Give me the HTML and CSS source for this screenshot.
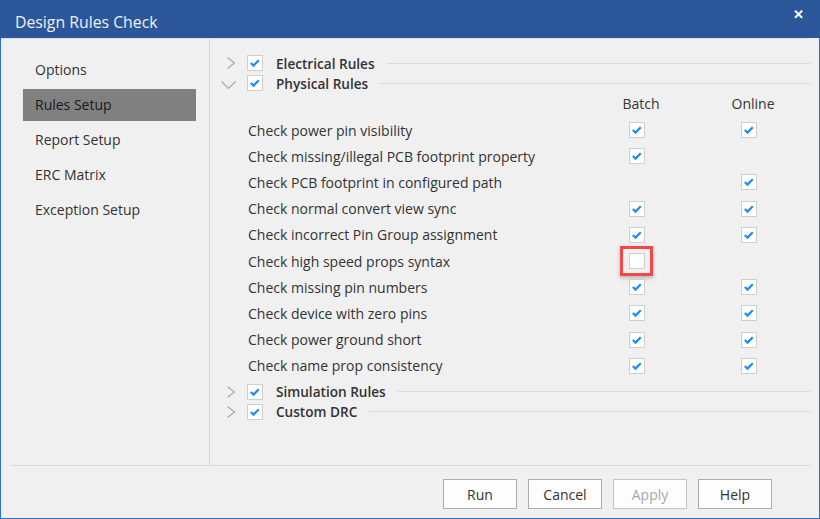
FILE: index.html
```html
<!DOCTYPE html>
<html>
<head>
    <title>Design Rules Check</title>
    <link rel="stylesheet" href="styles.css">
</head>
<body>
    <div class="window">
        <div class="titlebar">
            <span class="title">Design Rules Check</span>
            <span class="close">&#x2715;</span>
        </div>

        <div class="main">
            <div class="sidebar">
                <div class="nav-item">Options</div>
                <div class="nav-item active">Rules Setup</div>
                <div class="nav-item">Report Setup</div>
                <div class="nav-item">ERC Matrix</div>
                <div class="nav-item">Exception Setup</div>
            </div>

            <div class="panel">
                <div class="group">
                    <svg class="chevron" viewBox="0 0 16 16"><polyline points="6.5,2.5 13.5,8 6.5,13.5"/></svg>
                    <span class="cb checked"></span>
                    <span class="group-name">Electrical Rules</span>
                    <span class="rule-line"></span>
                </div>
                <div class="group">
                    <svg class="chevron" viewBox="0 0 16 16"><polyline points="0.5,6.5 7.5,13.5 14.5,6.5"/></svg>
                    <span class="cb checked"></span>
                    <span class="group-name">Physical Rules</span>
                    <span class="rule-line"></span>
                </div>

                <div class="col-head">
                    <span class="head batch">Batch</span>
                    <span class="head online">Online</span>
                </div>

                <div class="rules">
                    <div class="rule"><span class="label">Check power pin visibility</span><span class="cell"><span class="cb checked"></span></span><span class="cell"><span class="cb checked"></span></span></div>
                    <div class="rule"><span class="label">Check missing/illegal PCB footprint property</span><span class="cell"><span class="cb checked"></span></span><span class="cell"></span></div>
                    <div class="rule"><span class="label">Check PCB footprint in configured path</span><span class="cell"></span><span class="cell"><span class="cb checked"></span></span></div>
                    <div class="rule"><span class="label">Check normal convert view sync</span><span class="cell"><span class="cb checked"></span></span><span class="cell"><span class="cb checked"></span></span></div>
                    <div class="rule"><span class="label">Check incorrect Pin Group assignment</span><span class="cell"><span class="cb checked"></span></span><span class="cell"><span class="cb checked"></span></span></div>
                    <div class="rule"><span class="label">Check high speed props syntax</span><span class="cell"><span class="cb"></span><span class="highlight"></span></span><span class="cell"></span></div>
                    <div class="rule"><span class="label">Check missing pin numbers</span><span class="cell"><span class="cb checked"></span></span><span class="cell"><span class="cb checked"></span></span></div>
                    <div class="rule"><span class="label">Check device with zero pins</span><span class="cell"><span class="cb checked"></span></span><span class="cell"><span class="cb checked"></span></span></div>
                    <div class="rule"><span class="label">Check power ground short</span><span class="cell"><span class="cb checked"></span></span><span class="cell"><span class="cb checked"></span></span></div>
                    <div class="rule"><span class="label">Check name prop consistency</span><span class="cell"><span class="cb checked"></span></span><span class="cell"><span class="cb checked"></span></span></div>
                </div>

                <div class="group">
                    <svg class="chevron" viewBox="0 0 16 16"><polyline points="6.5,2.5 13.5,8 6.5,13.5"/></svg>
                    <span class="cb checked"></span>
                    <span class="group-name">Simulation Rules</span>
                    <span class="rule-line"></span>
                </div>
                <div class="group">
                    <svg class="chevron" viewBox="0 0 16 16"><polyline points="6.5,2.5 13.5,8 6.5,13.5"/></svg>
                    <span class="cb checked"></span>
                    <span class="group-name">Custom DRC</span>
                    <span class="rule-line"></span>
                </div>
            </div>
        </div>

        <div class="footer">
            <button class="btn">Run</button>
            <button class="btn">Cancel</button>
            <button class="btn" disabled>Apply</button>
            <button class="btn">Help</button>
        </div>
    </div>
</body>
</html>
```

FILE: styles.css
```css
body {
    margin: 0;
    font-family: "Open Sans", "Noto Sans", sans-serif;
    font-size: 14px;
    color: #333;
    background-color: #f0f0f0;
}

.window {
    width: 820px;
    height: 519px;
    box-sizing: border-box;
    border: 1px solid #2a6fd6;
    border-top: none;
    background-color: #f0f0f0;
    display: flex;
    flex-direction: column;
}

.titlebar {
    height: 38px;
    margin: 0 -1px;
    background-color: #2b579a;
    display: flex;
    align-items: center;
    justify-content: space-between;
    padding: 0 16px 0 15px;
    color: #eef1f6;
}

.title {
    font-size: 15.8px;
    padding-top: 5px;
}

.close {
    font-size: 13px;
    font-weight: bold;
    color: #fff;
    margin-top: -10px;
}

.main {
    height: 427px;
    box-sizing: border-box;
    border-top: 1px solid #e2e2e2;
    margin-right: 9px;
    display: flex;
}

/* left navigation */
.sidebar {
    width: 209px;
    flex: none;
    box-sizing: border-box;
    border-right: 1px solid #d9d9d9;
    padding: 15px 13px 0 22px;
}

.nav-item {
    height: 32px;
    line-height: 32px;
    margin-bottom: 3px;
    padding-left: 12px;
    color: #333;
}

.nav-item.active {
    background-color: #808080;
    color: #1a1a1a;
}

/* rules tree */
.panel {
    flex: 1;
    min-width: 0;
    padding: 14px 0 0 11px;
}

.group {
    height: 20px;
    display: flex;
    align-items: center;
}

.chevron {
    width: 16px;
    height: 16px;
    flex: none;
    fill: none;
    stroke: #a8a8a8;
    stroke-width: 1.2;
    margin-right: 10px;
}

.group-name {
    font-size: 13.6px;
    font-weight: 600;
    margin-left: 13px;
    color: #333;
}

.rule-line {
    flex: 1;
    border-top: 1px solid #d9d9d9;
    margin-left: 12px;
}

.cb {
    display: inline-block;
    width: 16px;
    height: 16px;
    box-sizing: border-box;
    border: 1px solid #cfcfcf;
    background-color: #fff;
    flex: none;
    vertical-align: top;
}

.cb.checked {
    background-image: url("data:image/svg+xml,%3Csvg xmlns='http://www.w3.org/2000/svg' viewBox='0 0 16 16'%3E%3Cpolyline points='3.2,8 6.3,11 12.3,4.8' fill='none' stroke='%231a8cff' stroke-width='2.5'/%3E%3C/svg%3E");
}

.col-head {
    height: 20px;
    margin-bottom: 4px;
    display: flex;
    align-items: center;
    padding-left: 390px;
}

.head {
    width: 60px;
    text-align: center;
}

.head.online {
    margin-left: 52px;
}

.rule {
    height: 26.2px;
    display: flex;
    align-items: center;
    padding-left: 27px;
}

.label {
    width: 381px;
    flex: none;
}

.cell {
    width: 16px;
    height: 16px;
    flex: none;
    position: relative;
    margin-right: 96px;
}

.cell:last-child {
    margin-right: 0;
}

.highlight {
    position: absolute;
    left: -9px;
    top: -7px;
    width: 33px;
    height: 30px;
    box-sizing: border-box;
    border: 3px solid #f44747;
    box-shadow: 0 2px 4px rgba(0, 0, 0, 0.25);
}

.rules {
    margin-bottom: 3px;
}

/* buttons */
.footer {
    flex: 1;
    margin: 0 9px;
    border-top: 1px solid #d9d9d9;
    display: flex;
    justify-content: flex-end;
    align-items: flex-start;
    gap: 11px;
    padding: 13px 38px 0 0;
}

.btn {
    width: 74px;
    height: 30px;
    font-family: "Open Sans", "Noto Sans", sans-serif;
    font-size: 14px;
    color: #333;
    background-color: #fdfdfd;
    border: 1px solid #adadad;
    padding: 0;
}

.btn:disabled {
    color: #a8a8a8;
    border-color: #c4c4c4;
}
```
